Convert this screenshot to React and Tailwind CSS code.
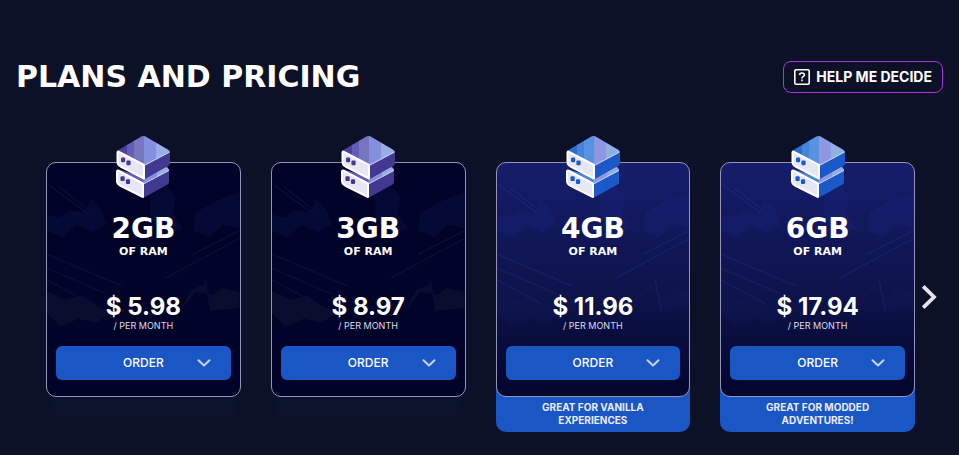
import React from 'react';

const plans = [
    { ram: '2GB', price: '5.98', tone: 'purple' },
    { ram: '3GB', price: '8.97', tone: 'purple' },
    { ram: '4GB', price: '11.96', tone: 'blue', note: ['Great for vanilla', 'experiences'] },
    { ram: '6GB', price: '17.94', tone: 'blue', note: ['Great for modded', 'adventures!'] },
];

const tones = {
    purple: { side: '#43388f', stripes: ['#4b429c', '#625db7', '#7675bd', '#8390df', '#9baee4'] },
    blue: { side: '#1b59c8', stripes: ['#2f6ccd', '#4684da', '#5a92e2', '#8d97e2', '#90b1e0'] },
};

const ServerIcon = ({ tone }) => {
    const { side, stripes } = tones[tone];
    const clipId = React.useId();

    return (
        <svg viewBox="0 0 56 64" className="h-16 w-14" aria-hidden="true">
            <defs>
                <clipPath id={clipId}>
                    <path d="M2 16 L26.5 1.5 Q28.5 .3 30.5 1.5 L53.5 15 Q55 16 54.5 17.5 L29.5 31Z" />
                </clipPath>
            </defs>
            {/* lower unit */}
            <path d="M28 49 L54 35.5 V47 Q54 48.5 52.5 49.5 L30 62 Q28.7 62.7 28 62.5Z" fill={side} />
            <path d="M2 34 L29 42 L52 31 L54 35.5 L29 49Z" fill={stripes[1]} />
            <path d="M28 42 L49 31.5 Q54 33 54 35.5 L29 49Z" fill={stripes[3]} />
            <path d="M42 34 L49 31.5 Q54 33 54 35.5 L42 42Z" fill={stripes[4]} />
            <path d="M2 36.5 Q2 35 3.5 35.7 L28 48.5 V62 L5 50.5 Q2 48.7 2 46Z" fill="#e6e6f4" stroke="#fff" strokeWidth="2" strokeLinejoin="round" />
            <path d="M29 48.7 L54 35.5" stroke="#d6dcf5" strokeWidth=".8" />
            {/* upper unit */}
            <path d="M2 16 L26.5 1.5 Q28.5 .3 30.5 1.5 L53.5 15 Q55.2 16.5 55 18 V28.5 Q55 29.8 53.5 30.7 L29 44.5Z" fill={side} />
            <g clipPath={`url(#${clipId})`}>
                <path d="M0 0H13V31H0z" fill={stripes[0]} />
                <path d="M12 0H20V31H12z" fill={stripes[1]} />
                <path d="M19 0H29V31H19z" fill={stripes[2]} />
                <path d="M29 0H41V31H29z" fill={stripes[3]} />
                <path d="M41 0H56V31H41z" fill={stripes[4]} />
            </g>
            <path d="M2.5 17.5 Q2.5 16 4 16.8 L29 30 V43.5 L5.5 31.5 Q2.5 29.7 2.5 27Z" fill="#e6e6f4" stroke="#fff" strokeWidth="2" strokeLinejoin="round" />
            <path d="M30 30 L54.5 17" stroke="#d6dcf5" strokeWidth=".8" />
            <g fill={side}>
                <rect x="6" y="22.5" width="4.2" height="4.8" rx="1.2" />
                <rect x="11.4" y="25.4" width="4.2" height="4.8" rx="1.2" />
                <rect x="5.5" y="41.3" width="4.2" height="4.8" rx="1.2" />
                <rect x="10.9" y="44.2" width="4.2" height="4.8" rx="1.2" />
            </g>
        </svg>
    );
};

// faint landscape behind the card content
const CardArt = ({ tone }) => (
    <svg viewBox="0 0 195 235" preserveAspectRatio="none" className="absolute inset-0 h-full w-full opacity-25" aria-hidden="true">
        <g fill={tone === 'blue' ? '#1b2a86' : '#0f1c5c'}>
            <path d="M0 52 L12 55 L24 48 L38 50 L45 36 L55 47 L60 62 L46 70 L30 62 L16 75 L0 68Z" />
            <path d="M104 30 L120 22 L130 35 L127 52 L138 66 L118 72 L105 55Z" />
            <path d="M150 50 L172 38 L195 29 V66 L178 62 L164 75 L148 68Z" />
            <path d="M93 190 Q108 180 132 195 Q120 203 103 198Z" />
        </g>
        <g fill={tone === 'blue' ? '#111d63' : '#242c3c'}>
            <path d="M0 129 L18 138 L36 134 L52 145 L66 151 L50 161 L32 157 L14 165 L0 152Z" />
            <path d="M134 150 L146 128 L160 122 L166 149 L195 146 V130 L177 126 L168 133 L150 130Z" />
        </g>
        <g stroke={tone === 'blue' ? '#2638a8' : '#1a2970'} strokeWidth="1.5" fill="none">
            <path d="M2 22 L40 50 M12 24 L52 55 M0 92 L76 124 M0 106 L60 132 M0 118 L45 142 M120 116 L195 76 M148 92 L195 68 M160 118 L166 150" />
        </g>
    </svg>
);

const PlanCard = ({ plan }) => (
    <li className="flex flex-col uppercase">
        <article className={`relative z-10 flex flex-col rounded-[10px] border border-[#9693b9] px-[9px] pt-[50px] pb-4 text-center ${plan.tone === 'blue' ? 'bg-linear-to-b from-[#161e6c] via-[#0d1248] via-60% to-[#03062c]' : 'bg-[#020329] shadow-[0_24px_4px_-6px_#0c142d]'}`}>
            <div className="absolute inset-0 overflow-hidden rounded-[10px]"><CardArt tone={plan.tone} /></div>
            <div className="absolute inset-x-0 -top-7 flex justify-center"><ServerIcon tone={plan.tone} /></div>
            <h2 className="relative font-['DejaVu_Sans',sans-serif] font-bold">
                <span className="block text-[28px] leading-8">{plan.ram}</span>
                <span className="block text-[11px] leading-[14px]">of RAM</span>
            </h2>
            <p className="relative mt-8">
                <span className="block text-2xl leading-8 font-bold">$ {plan.price}</span>
                <span className="block text-[9px] leading-[6px] text-[#dedded]">/ per month</span>
            </p>
            <button type="button" aria-haspopup="menu" className="relative mt-[17px] grid h-[34px] grid-cols-[1fr_auto_1fr] items-center rounded-md bg-[#1a56c4] px-5 text-xs font-medium uppercase">
                <span className="col-start-2">Order</span>
                <svg viewBox="0 0 14 8" className="h-2 w-3.5 justify-self-end" fill="none" stroke="#c9d3f3" strokeWidth="2" strokeLinecap="round" strokeLinejoin="round" aria-hidden="true">
                    <path d="M1.5 1.2 L7 6.5 L12.5 1.2" />
                </svg>
            </button>
        </article>
        {plan.note && (
            <p className="-mt-3 rounded-b-[10px] bg-[#1a56c4] pt-4 pb-[5px] text-center text-[10px] leading-[13px] font-bold text-[#e9ecfa]">
                {plan.note[0]}<br />{plan.note[1]}
            </p>
        )}
    </li>
);

const App = () => {
    return (
        <main className="min-h-screen bg-[#0d1128] pt-[61px] pb-6 font-['Inter',sans-serif] text-white">
            <header className="flex items-center justify-between px-4">
                <h1 className="font-['DejaVu_Sans',sans-serif] text-[30px] leading-8 font-bold uppercase">Plans and pricing</h1>
                <button type="button" className="flex h-8 items-center gap-1.5 rounded-lg border border-[#a735dc] px-2.5 text-sm font-bold uppercase">
                    <svg viewBox="0 0 16 16" className="size-4" fill="none" stroke="#fff" strokeWidth="1.6" aria-hidden="true">
                        <rect x=".8" y=".8" width="14.4" height="14.4" rx="1.2" />
                        <path d="M5.6 6.1 Q5.6 4 8 4 Q10.4 4 10.4 5.9 Q10.4 6.9 9 7.6 Q8 8.2 8 9.4" />
                        <path d="M8 10.6 V12.3" />
                    </svg>
                    Help me decide
                </button>
            </header>
            <section className="mt-[69px] flex items-center pl-[46px]" aria-label="Plans">
                <ul className="grid flex-1 grid-cols-4 gap-[30px]">
                    {plans.map((plan) => <PlanCard key={plan.ram} plan={plan} />)}
                </ul>
                <button type="button" aria-label="Next plans" className="flex w-11 pl-1.5">
                    <svg viewBox="0 0 16 26" className="h-[26px] w-4" fill="none" stroke="#e6e4ef" strokeWidth="3.8" aria-hidden="true">
                        <path d="M2.2 2.4 L13 13 L2.2 23.6" />
                    </svg>
                </button>
            </section>
        </main>
    );
};

export default App;
